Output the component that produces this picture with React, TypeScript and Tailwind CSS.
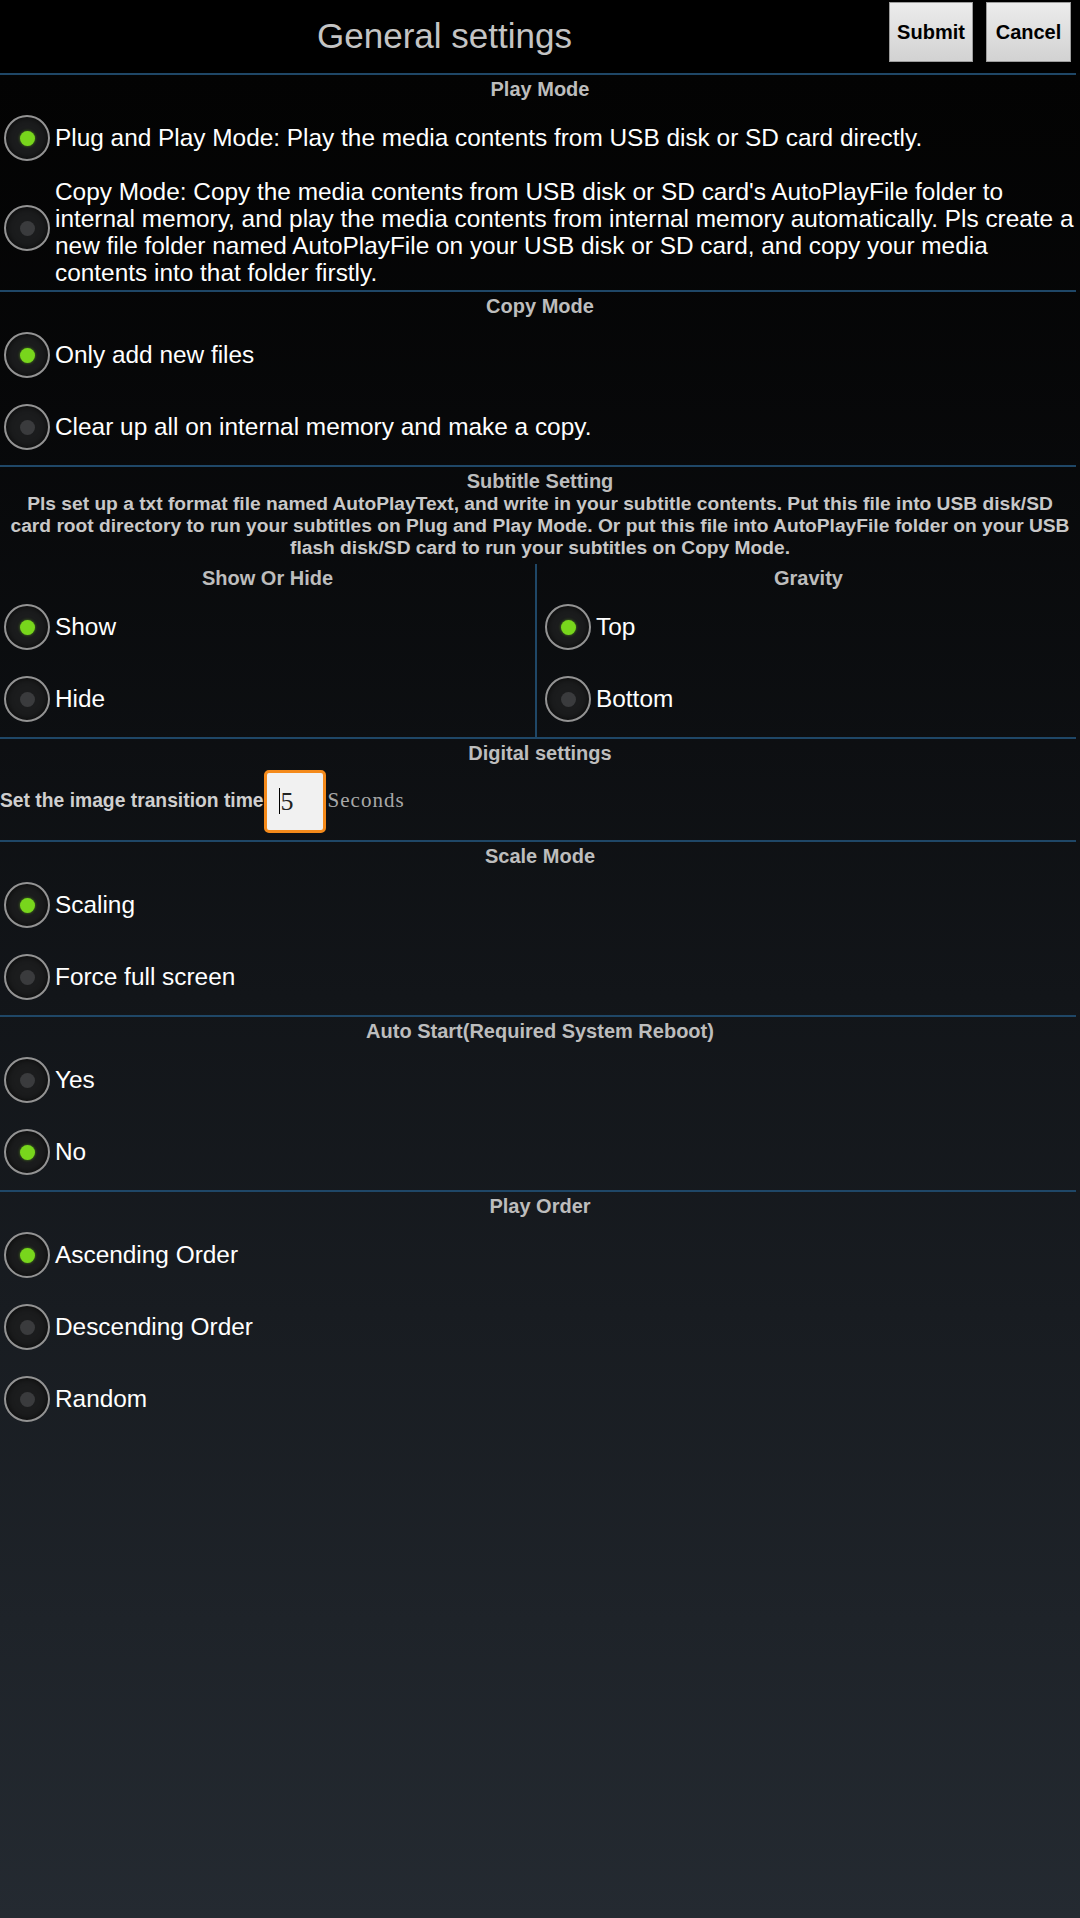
import React from "react";

type RadioProps = { checked?: boolean; className?: string };

function Radio({ checked, className = "" }: RadioProps) {
  return (
    <div
      className={`flex h-[46px] w-[46px] shrink-0 items-center justify-center rounded-full border-2 border-[#939393] bg-[#1b1c1d] shadow-[inset_0_0_6px_rgba(0,0,0,0.8)] ${className}`}
    >
      <div
        className={
          checked
            ? "h-[15px] w-[15px] rounded-full bg-[#78d61c] shadow-[0_0_3px_rgba(120,220,30,0.6)]"
            : "h-[15px] w-[15px] rounded-full bg-[#3a3b3d]"
        }
      />
    </div>
  );
}

function Option({ label, checked }: { label: string; checked?: boolean }) {
  return (
    <div className="flex h-[72px] items-center gap-[5px] pb-[4px] pl-1">
      <Radio checked={checked} />
      <span className="text-[24.4px] text-white">{label}</span>
    </div>
  );
}

function Divider() {
  return <div className="mr-1 h-[2px] bg-[#1f4767]" />;
}

function SectionTitle({ children }: { children: React.ReactNode }) {
  return (
    <div className="h-[29px] text-center text-[20px] font-bold leading-[29px] text-[#bdbdbd]">
      {children}
    </div>
  );
}

export default function App() {
  return (
    <div className="flex min-h-screen flex-col bg-black font-['Liberation_Sans',Arial,sans-serif]">
      <header className="flex h-[73px] bg-black">
        <h1 className="flex-1 self-center text-center text-[35px] text-[#c4c4c4]">General settings</h1>
        <div className="mt-[2px] flex gap-[13px] pr-[9px]">
          <button className="h-[60px] w-[84px] border border-[#9c9c9c] bg-linear-to-b from-[#ececec] to-[#d2d2d2] text-[20px] font-bold text-black">
            Submit
          </button>
          <button className="h-[60px] w-[85px] border border-[#9c9c9c] bg-linear-to-b from-[#ececec] to-[#d2d2d2] text-[20px] font-bold text-black">
            Cancel
          </button>
        </div>
      </header>

      <main className="flex-1 bg-linear-to-b from-[#030303] via-[#121519] to-[#242a31]">
        <Divider />
        <SectionTitle>Play Mode</SectionTitle>
        <Option checked label="Plug and Play Mode: Play the media contents from USB disk or SD card directly." />
        <div className="flex h-[114px] items-start gap-[5px] pt-[2px] pl-1">
          <Radio className="mt-[27px]" />
          <p className="text-[24.4px] leading-[27px] text-white">
            Copy Mode: Copy the media contents from USB disk or SD card's AutoPlayFile folder to
            <br />
            internal memory, and play the media contents from internal memory automatically. Pls create a
            <br />
            new file folder named AutoPlayFile on your USB disk or SD card, and copy your media
            <br />
            contents into that folder firstly.
          </p>
        </div>

        <Divider />
        <SectionTitle>Copy Mode</SectionTitle>
        <Option checked label="Only add new files" />
        <Option label="Clear up all on internal memory and make a copy." />

        <Divider />
        <SectionTitle>Subtitle Setting</SectionTitle>
        <p className="-mt-[3px] whitespace-nowrap pb-[5px] text-center text-[19.2px] font-bold leading-[22px] text-[#c8c8c8]">
          Pls set up a txt format file named AutoPlayText, and write in your subtitle contents. Put this file into USB disk/SD
          <br />
          card root directory to run your subtitles on Plug and Play Mode. Or put this file into AutoPlayFile folder on your USB
          <br />
          flash disk/SD card to run your subtitles on Copy Mode.
        </p>
        <div className="mr-1 flex">
          <div className="flex-1">
            <SectionTitle>Show Or Hide</SectionTitle>
            <Option checked label="Show" />
            <Option label="Hide" />
          </div>
          <div className="w-[2px] bg-[#1f4767]" />
          <div className="flex-1 pl-[4px]">
            <SectionTitle>Gravity</SectionTitle>
            <Option checked label="Top" />
            <Option label="Bottom" />
          </div>
        </div>

        <Divider />
        <SectionTitle>Digital settings</SectionTitle>
        <div className="flex h-[72px] items-center pb-[6px]">
          <span className="text-[19.3px] font-bold text-[#cfcfcf]">Set the image transition time</span>
          <div className="flex h-[63px] w-[62px] items-center rounded-[5px] border-[3px] border-[#f48a1b] bg-[#f1f1f1] pl-[12px]">
            <span className="mr-[1px] h-[26px] w-[1px] bg-black" />
            <span className="font-['Liberation_Serif',serif] text-[26px] text-[#222]">5</span>
          </div>
          <span className="ml-[2px] font-['Liberation_Serif',serif] text-[21px] tracking-[1px] text-[#a8a8a8]">Seconds</span>
        </div>

        <Divider />
        <SectionTitle>Scale Mode</SectionTitle>
        <Option checked label="Scaling" />
        <Option label="Force full screen" />

        <Divider />
        <SectionTitle>Auto Start(Required System Reboot)</SectionTitle>
        <Option label="Yes" />
        <Option checked label="No" />

        <Divider />
        <SectionTitle>Play Order</SectionTitle>
        <Option checked label="Ascending Order" />
        <Option label="Descending Order" />
        <Option label="Random" />
      </main>
    </div>
  );
}
